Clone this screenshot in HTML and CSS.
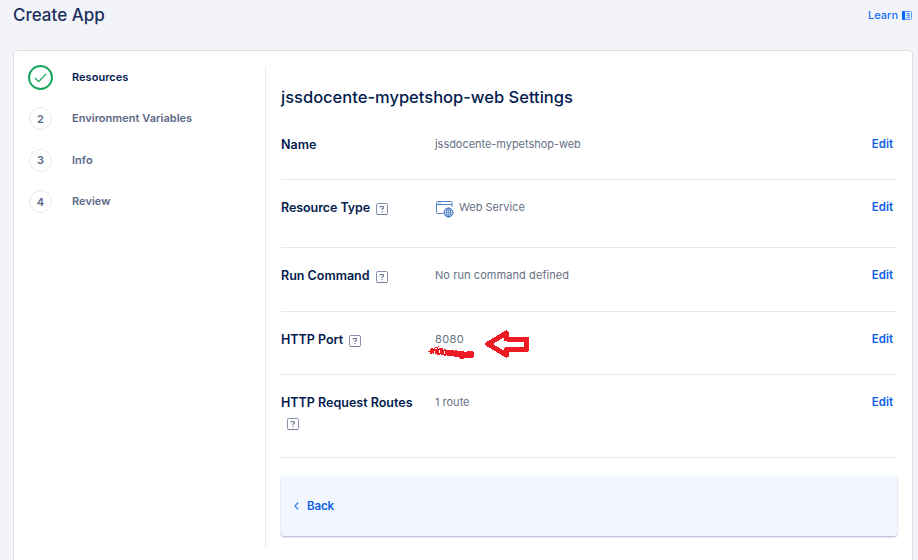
FILE: index.html
```html
<!DOCTYPE html>
<html lang="en">
<head>
<meta charset="utf-8">
<title>Create App</title>
<link rel="stylesheet" href="styles.css">
</head>
<body>
<svg class="defs" width="0" height="0" aria-hidden="true">
  <symbol id="help" viewBox="0 0 12 12">
    <rect x=".5" y=".5" width="11" height="11" rx="1.2" fill="#fff" stroke="#8990ab"/>
    <path d="M1 11.5H11" stroke="#747c9b"/>
    <path d="M4.3 4.5V3.5H7.3V5.3L6 6V7M6 8V9.2" fill="none" stroke="#737b98" stroke-width="1.2"/>
  </symbol>
</svg>
<header class="topbar">
  <h1>Create App</h1>
  <a class="learn"><span>Learn</span>
    <svg width="10" height="9" viewBox="0 0 10 9"><rect x=".5" y=".5" width="9" height="8" rx="1" fill="#dce9ff" stroke="#5c9dff"/><rect width="3" height="9" rx="1" fill="#0069ff"/><path d="M4.500 2.500H7V6.500H4.500M4.500 4.500H7" fill="none" stroke="#4389f2" stroke-width=".9"/></svg>
  </a>
</header>
<main class="panel">
  <nav class="steps">
    <div class="step active"><span class="badge"><svg width="13" height="10" viewBox="0 0 13 10"><path d="M1 5L4.6 8.6L12 1" fill="none" stroke="#15a85c" stroke-width="1.2"/></svg></span><span class="step-name">Resources</span></div>
    <div class="step"><span class="badge">2</span><span class="step-name">Environment Variables</span></div>
    <div class="step"><span class="badge">3</span><span class="step-name">Info</span></div>
    <div class="step"><span class="badge">4</span><span class="step-name">Review</span></div>
  </nav>
  <section class="settings">
    <h2>jssdocente-mypetshop-web Settings</h2>
    <div class="row name"><div class="label">Name</div><div class="value name-value">jssdocente-mypetshop-web</div><a class="edit">Edit</a></div>
    <div class="row type"><div class="label type-label">Resource Type<svg class="help"><use href="#help"/></svg></div>
      <div class="value service"><svg width="18" height="17" viewBox="0 0 18 17"><g fill="none" stroke="#5283ca"><path d="M7 12.500H1.500Q.5 12.500 .5 11.500V1.500Q.5 .5 1.500 .5H15Q16 .5 16 1.500V6M.5 3.500H16"/><path d="M2 2H5" stroke="#9cb8e2"/><circle cx="12.500" cy="11.500" r="4.500" fill="#e4edfa" stroke="#3269bb"/><ellipse cx="12.500" cy="11.500" rx="2" ry="4.500" stroke="#3269bb" stroke-width=".8"/><path d="M8 11.500H17M9 9.300H16M9 13.700H16M12.500 7V16" stroke="#3269bb" stroke-width=".5"/></g></svg><span>Web Service</span></div><a class="edit">Edit</a></div>
    <div class="row command"><div class="label">Run Command<svg class="help"><use href="#help"/></svg></div><div class="value command-value">No run command defined</div><a class="edit">Edit</a></div>
    <div class="row port"><div class="label">HTTP Port<svg class="help"><use href="#help"/></svg></div><div class="value port-number">8080
      <svg class="marks" width="102" height="30" viewBox="0 0 102 30" shape-rendering="crispEdges">
        <g fill="none" stroke="#ed1c24"><path d="M0 21H2L4 18L5 23L7 18L10 17L9 25L12 18L15 18L14 25L17 19L19 24L22 20L25 25L28 20" stroke-width="1"/><path d="M2 21L10 21.500L20 22.500L30 23" stroke-width="5" stroke-dasharray="2 1 1 1"/><path d="M10 24L22 25L30 26" stroke-width="2" stroke-dasharray="2 1"/><path d="M19 22.500L26 23.500L36 24.500L42 24.500" stroke-width="6" stroke-dasharray="4 .3"/></g>
        <g fill="#ed1c24"><circle cx="29" cy="24" r="3.400"/><circle cx="34" cy="25" r="3.800"/><circle cx="42" cy="24.500" r="4"/></g>
        <path d="M60 14L78.500 3V9H98.500V19.500H78.500V25Z" fill="#fff" stroke="#ed1c24" stroke-width="5" stroke-linejoin="round"/>
      </svg></div><a class="edit">Edit</a></div>
    <div class="row routes"><div class="label">HTTP Request Routes <svg class="help"><use href="#help"/></svg></div><div class="value">1 route</div><a class="edit">Edit</a></div>
    <div class="footer"><svg width="5" height="8" viewBox="0 0 5 8"><path d="M4.300 .5L.9 4L4.300 7.500" fill="none" stroke="#3078ee" stroke-width="1.1"/></svg><a class="back">Back</a></div>
  </section>
</main>
</body>
</html>
```
FILE: styles.css
```css
* { box-sizing: border-box; }
body { margin: 0; height: 560px; overflow: hidden; background: #f3f4f9; font-family: Inter, "Liberation Sans", sans-serif; color: #031b4e; }
h1, h2 { margin: 0; font-weight: 500; }
.defs { position: absolute; }
.topbar { height: 50px; padding: 5px 6px 0 13px; display: flex; justify-content: space-between; align-items: flex-start; }
h1 { font-size: 17px; line-height: 20px; color: #1c2f60; }
.learn { display: flex; align-items: center; gap: 4px; font-size: 11px; line-height: 20px; font-weight: 500; color: #1670f5; }
.panel { margin: 0 5px 0 13px; height: 520px; border: 1px solid #dfe0e4; border-radius: 4px; background: #fff; padding: 15px 15px 0 13px; display: flex; }
.steps { width: 239px; height: 482px; border-right: 1px solid #e5e8ed; padding-top: 1px; }
.step { height: 41.4px; display: flex; align-items: flex-start; color: #5b6987; font-size: 11px; font-weight: 600; line-height: 20px; }
.step-name { letter-spacing: .03px; }
.badge { width: 23px; height: 23px; margin: -1px 20px 0 2px; border: 1px solid #e5e8ed; border-radius: 50%; display: flex; justify-content: center; align-items: center; }
.active { color: #031b4e; }
.active .badge { width: 25px; height: 25px; margin: -2px 19px 0 1px; border: 2px solid #15a85c; }
.settings { flex: 1; padding-left: 15px; }
h2 { font-size: 16.5px; line-height: 20px; margin-top: 21px; color: #031b4e; margin-bottom: 10px; }
.row { display: grid; grid-template-columns: 154px 1fr auto; border-bottom: 1px solid #e5e8ed; padding: 17px 4px 0 0; font-size: 11px; line-height: 20px; }
.name { height: 63px; }
.type { height: 68px; }
.command { height: 64px; }
.port { height: 63px; }
.routes { height: 83px; }
.label { font-size: 12.5px; font-weight: 600; padding: 1px 16px 0 0; }
.type-label { letter-spacing: -.07px; }
.help { width: 12px; height: 12px; margin-left: 6px; vertical-align: -3px; }
.value { color: #676f85; position: relative; }
.name-value { letter-spacing: -.04px; }
.command-value { letter-spacing: .08px; }
.port-number { letter-spacing: .4px; }
.service { display: flex; align-items: flex-start; gap: 5px; }
.service svg { margin: 4px 0 0 1px; }
.marks { position: absolute; left: -7px; top: 1px; }
.edit { color: #0f61e5; font-size: 11.5px; font-weight: 600; }
.footer { height: 60px; margin-top: 18px; border-radius: 3px; background: #f2f6ff; box-shadow: 0 1px 2px #a5b0c8; display: flex; align-items: center; padding-left: 13px; gap: 8px; }
.back { color: #0f61e5; font-size: 11.5px; font-weight: 600; letter-spacing: -.15px; }
```
